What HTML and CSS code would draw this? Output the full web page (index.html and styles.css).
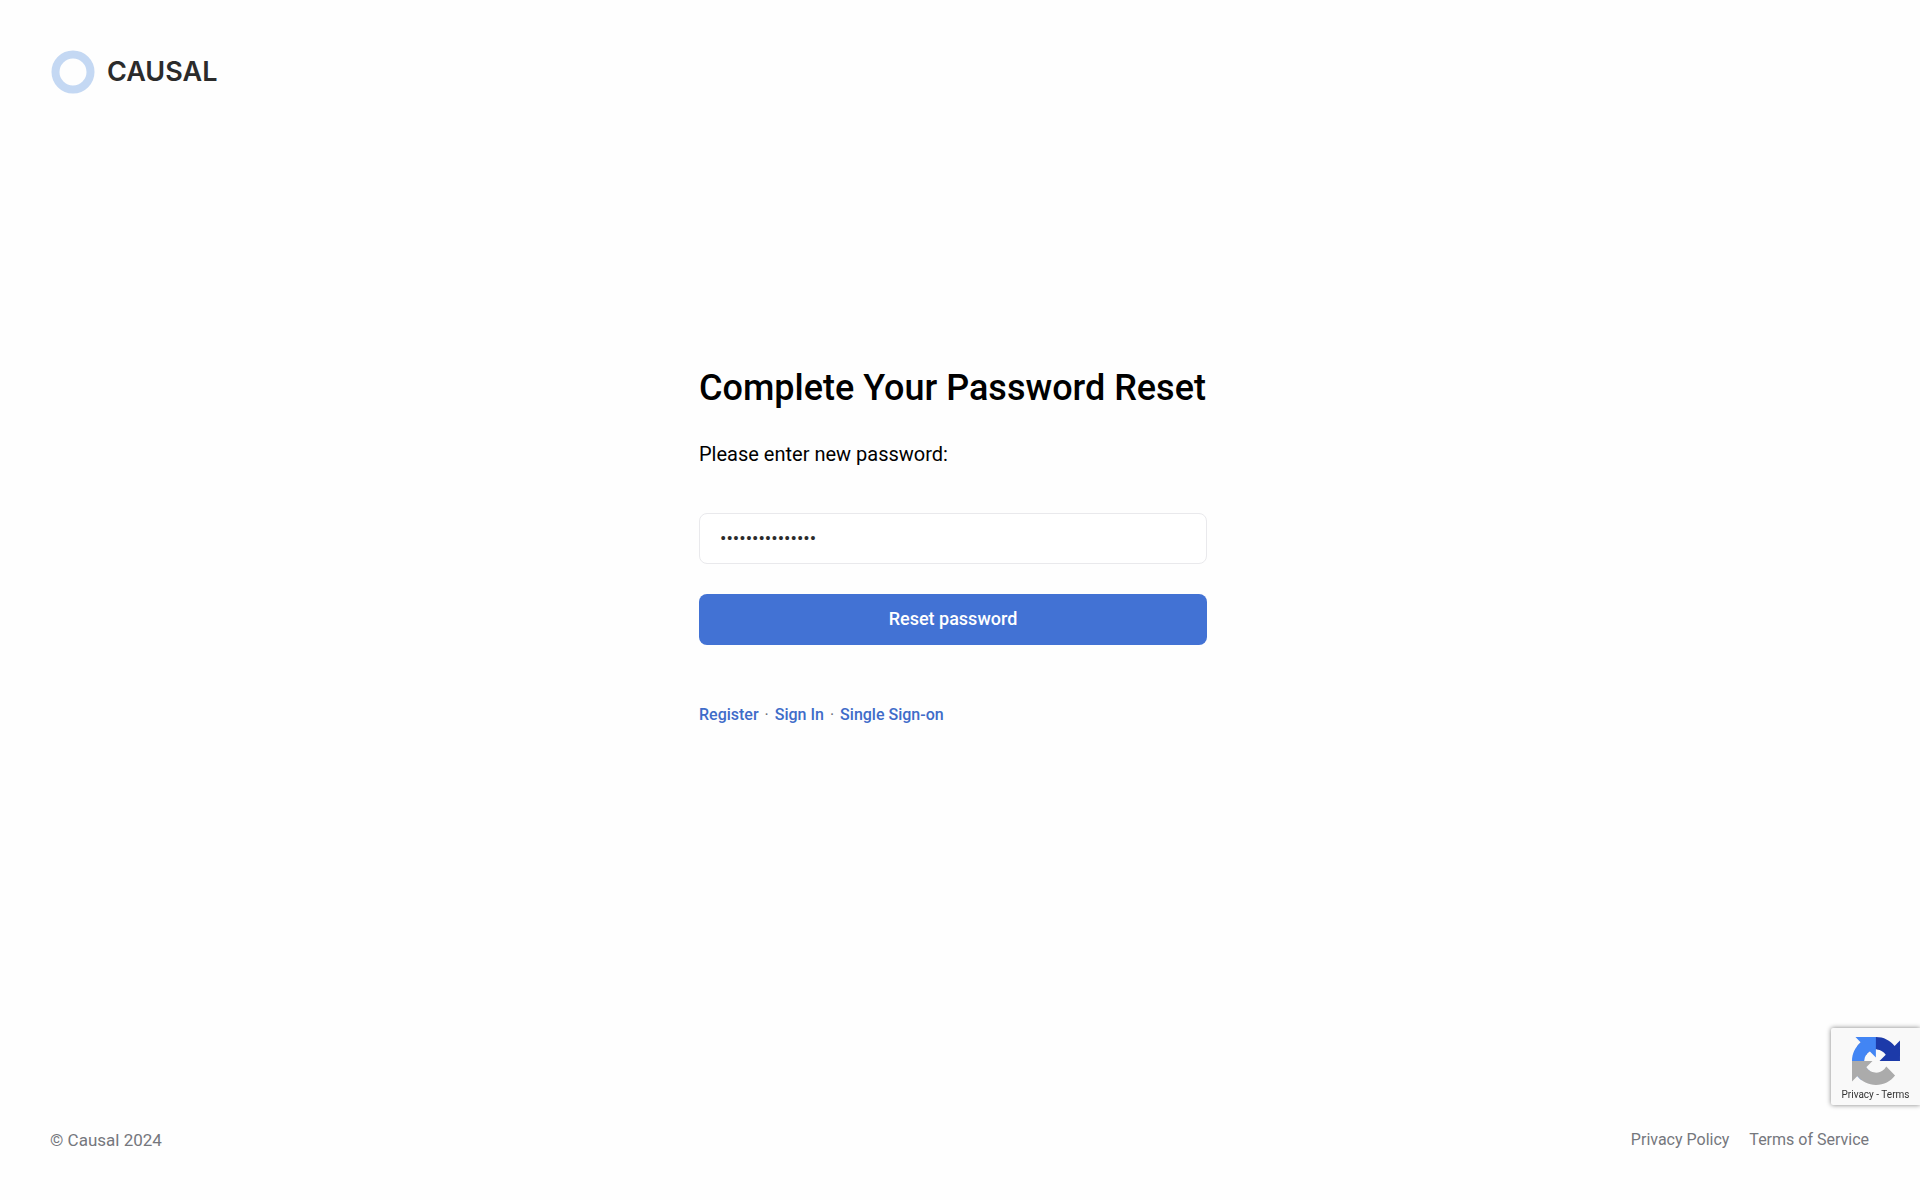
FILE: index.html
```
<!DOCTYPE html>
<html lang="en">
<head>
<meta charset="utf-8">
<meta name="viewport" content="width=device-width, initial-scale=1">
<title>Causal – Password Reset</title>
<link rel="stylesheet" href="styles.css">
</head>
<body>
<header class="site-header">
  <a class="brand" href="#">
    <svg class="brand-mark" viewBox="0 0 44 44" aria-hidden="true"><circle cx="22" cy="22" r="17.5" fill="none" stroke="#c4d8f3" stroke-width="8"/></svg>
    <span>CAUSAL</span>
  </a>
</header>
<main class="content">
  <form class="reset-form">
    <h1 class="title">Complete Your Password Reset</h1>
    <label class="prompt" for="password">Please enter new password:</label>
    <input class="password" id="password" type="password" value="correcthorse123">
    <button class="submit" type="button">Reset password</button>
    <nav class="account-links">
      <a href="#">Register</a><span class="dot">·</span><a href="#">Sign In</a><span class="dot">·</span><a href="#">Single Sign-on</a>
    </nav>
  </form>
</main>
<footer class="site-footer">
  <span>© Causal 2024</span>
  <nav class="legal-links"><a href="#">Privacy Policy</a><a href="#">Terms of Service</a></nav>
</footer>
<aside class="captcha">
  <svg class="captcha-mark" viewBox="0 0 64 64" aria-hidden="true">
    <path fill="#1c3aa9" d="M64 31.955l-.033-1.37V4.687l-7.16 7.16C50.948 4.674 42.033.093 32.05.093c-10.4 0-19.622 4.96-25.458 12.64l11.736 11.86a15.55 15.55 0 0 1 4.754-5.334c2.05-1.6 4.952-2.906 8.968-2.906.485 0 .86.057 1.135.163 4.976.393 9.288 3.14 11.828 7.124l-8.307 8.307L64 31.953"/>
    <path fill="#4285f4" d="M31.862.094l-1.37.033H4.594l7.16 7.16C4.58 13.147 0 22.06 0 32.046c0 10.4 4.96 19.622 12.64 25.458L24.5 45.768a15.55 15.55 0 0 1-5.334-4.754c-1.6-2.05-2.906-4.952-2.906-8.968 0-.485.057-.86.163-1.135.393-4.976 3.14-9.288 7.124-11.828l8.307 8.307L31.86.095"/>
    <path fill="#ababab" d="M.001 32.045l.033 1.37v25.898l7.16-7.16c5.86 7.173 14.774 11.754 24.76 11.754 10.4 0 19.622-4.96 25.458-12.64l-11.736-11.86a15.55 15.55 0 0 1-4.754 5.334c-2.05 1.6-4.952 2.906-8.968 2.906-.485 0-.86-.057-1.135-.163-4.976-.393-9.288-3.14-11.828-7.124l8.307-8.307c-10.522.04-22.4.066-27.295-.005"/>
  </svg>
  <div class="captcha-links"><a href="#">Privacy</a> - <a href="#">Terms</a></div>
</aside>
</body>
</html>
```
FILE: styles.css
```
* { box-sizing: border-box; }
body {
  margin: 0;
  min-height: 100vh;
  display: flex;
  flex-direction: column;
  background: #fefefe;
  color: #000;
  font-family: Roboto, "Liberation Sans", sans-serif;
}
a { color: inherit; text-decoration: none; }
.site-header { padding: 50px 51px 0; }
.brand {
  display: inline-flex;
  align-items: center;
  gap: 12px;
  color: #2b2b2b;
  font: 600 27px/44px Inter, sans-serif;
}
.brand-mark { width: 44px; height: 44px; }
.content {
  flex: 1;
  display: flex;
  justify-content: center;
  align-items: center;
  padding: 0 14px 136px 0;
}
.reset-form {
  width: 508px;
  display: flex;
  flex-direction: column;
}
.title { margin: 0 0 28px; font-size: 36px; line-height: 48px; font-weight: 500; white-space: nowrap; }
.prompt { font-size: 20px; line-height: 28px; margin-bottom: 45px; }
.password {
  height: 51px;
  padding: 0 20px;
  border: 1px solid #e9e9ec;
  border-radius: 8px;
  background: #fff;
  color: #2b2b2b;
  font: 19px/24px Roboto, sans-serif;
}
.submit {
  height: 51px;
  margin-top: 30px;
  border: 0;
  border-radius: 8px;
  background: #4272d4;
  color: #fff;
  font: 500 18px/24px Roboto, sans-serif;
}
.account-links {
  display: flex;
  gap: 6px;
  margin-top: 58px;
  color: #3f6cc9;
  font-size: 16px;
  line-height: 24px;
  font-weight: 500;
}
.dot { color: #6b6e76; font-weight: 400; }
.site-footer {
  display: flex;
  justify-content: space-between;
  padding: 0 51px 48px 50px;
  color: #75777d;
  font-size: 17px;
  line-height: 24px;
}
.legal-links { display: flex; gap: 20px; font-size: 16px; }
.captcha {
  position: fixed;
  right: 0;
  bottom: 95px;
  width: 89px;
  height: 77px;
  padding-top: 9px;
  display: flex;
  flex-direction: column;
  align-items: center;
  gap: 3px;
  border-radius: 2px 0 0 2px;
  background: #f9f9f9;
  box-shadow: 0 0 5px #808080;
  color: #333;
  font-size: 10px;
  line-height: 14px;
}
.captcha-mark { width: 48px; height: 48px; }
```
